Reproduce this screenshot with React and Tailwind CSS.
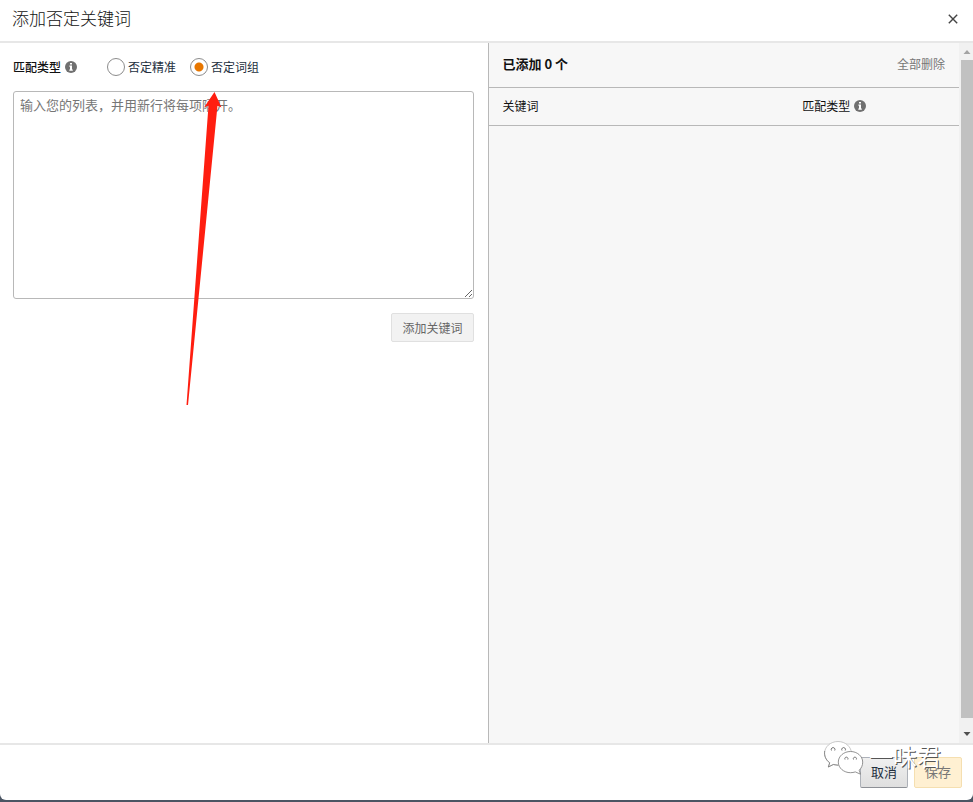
import { useState } from "react";

const MATCH_TYPES = [
  { value: "exact", label: "否定精准" },
  { value: "phrase", label: "否定词组" },
];

function InfoIcon() {
  return (
    <svg viewBox="0 0 12 12" className="size-3 shrink-0" aria-hidden="true">
      <circle cx="6" cy="6" r="6" fill="#707070" />
      <path d="M5 2h2v1.6H5zM4.4 4.6H7v4h.8v1.2H4.300V8.600H5V5.800h-.6z" fill="#fff" />
    </svg>
  );
}

function Watermark() {
  return (
    <div className="pointer-events-none absolute right-8 bottom-6 flex items-start">
      <svg viewBox="0 0 46 36" className="h-9 w-[46px]" aria-hidden="true">
        <g fill="#fff" strokeWidth="0.8" strokeLinejoin="round">
          <path
            d="M15 1.500C7.500 1.500 1.500 6.800 1.500 13.500c0 3.800 2 7.200 5.200 9.300l-1.400 4.200 5-2.500c1.500.4 3 .7 4.700.7 7.500 0 13.500-5.200 13.500-11.700S22.500 1.500 15 1.500z"
            stroke="#bbb"
          />
          <path d="M1.700 11c-.8 4.700 1.300 9 5 11.800l-1.400 4.200 5-2.500 4.700.7" stroke="#777" fill="none" />
          <path
            d="M27.500 11.500c-6.700 0-12.200 4.700-12.200 10.600s5.500 10.600 12.200 10.600c1.700 0 3.300-.3 4.800-.8l5.200 2.300-1.300-4c2.200-2 3.500-4.900 3.500-8.100 0-5.900-5.500-10.600-12.200-10.600z"
            stroke="#777"
          />
        </g>
        <g fill="none" stroke="#666" strokeWidth="0.9">
          <path d="M8.500 10.500a1.900 1.900 0 1 1 3.200 0M19 10.500a1.900 1.900 0 1 1 3.200 0" />
          <path d="M22 19.500a1.600 1.600 0 1 1 2.800 0M30.500 19.500a1.600 1.600 0 1 1 2.800 0" />
        </g>
      </svg>
      <span className="text-2xl leading-8 text-white [text-shadow:1px_1px_0_#555]">
        一味君
      </span>
    </div>
  );
}

export default function App() {
  const [matchType, setMatchType] = useState("phrase");
  const [text, setText] = useState("");

  return (
    <div className="h-screen bg-[#4b5563] pb-0.5 font-['Noto_Sans_CJK_SC',sans-serif] text-xs text-[#111]">
      <div className="relative flex h-full flex-col overflow-hidden rounded-b-md bg-white">
        {/* Header */}
        <header className="flex h-[43px] shrink-0 items-center justify-between border-b-2 border-[#e7e7e7] pr-3.5 pb-1.5 pl-3">
          <h1 className="text-[17px] leading-6 font-light">添加否定关键词</h1>
          <button type="button" aria-label="关闭" className="cursor-pointer pt-0.5">
            <svg viewBox="0 0 12 12" className="size-3" aria-hidden="true">
              <path d="M1.800 1.800l8.400 8.400M10.200 1.800l-8.400 8.400" stroke="#444" strokeWidth="1.400" />
            </svg>
          </button>
        </header>

        <main className="flex min-h-0 flex-1">
          {/* Keyword entry */}
          <section className="relative w-[calc(50%+1px)] pt-3 pr-3.5 pl-[13px]">
            <div
              role="radiogroup"
              aria-labelledby="match-type"
              className="flex h-6 items-center"
            >
              <span id="match-type" className="mr-1 font-medium">
                匹配类型
              </span>
              <InfoIcon />
              <div className="ml-[30px] flex gap-3.5">
                {MATCH_TYPES.map((type) => (
                  <label
                    key={type.value}
                    className="flex cursor-pointer items-center gap-[3px] text-[#232f3e]"
                  >
                    <input
                      type="radio"
                      name="matchType"
                      value={type.value}
                      checked={matchType === type.value}
                      onChange={() => setMatchType(type.value)}
                      className="size-[18px] appearance-none rounded-full border border-[#8c8c8c] bg-white checked:bg-[radial-gradient(circle,#e77600_4px,#fff_5px)]"
                    />
                    {type.label}
                  </label>
                ))}
              </div>
            </div>

            <textarea
              aria-label="关键词"
              placeholder="输入您的列表，并用新行将每项隔开。"
              value={text}
              onChange={(e) => setText(e.target.value)}
              className="mt-3 block h-52 w-full resize rounded-[3px] border border-[#b8b8b8] px-1.5 py-1 text-[13px] leading-[18px] placeholder:text-[#767676]"
            />

            <div className="mt-3.5 flex justify-end">
              <button
                type="button"
                disabled={!text}
                className="h-[29px] rounded-xs border border-[#e0e0e0] bg-[#f2f2f2] px-2.5 text-[#666]"
              >
                添加关键词
              </button>
            </div>

            {/* Arrow pointing at the phrase option */}
            <svg
              viewBox="0 0 36 314"
              className="pointer-events-none absolute top-12 left-[186px] h-[314px] w-9"
              aria-hidden="true"
            >
              <path d="M28.500 1L35.500 16.500L31.500 14.500L2 314H.5L22.500 14.500L18 16.500Z" fill="#ff1e10" />
            </svg>
          </section>

          {/* Added keywords */}
          <section className="flex min-w-0 flex-1 border-l border-[#b8b8b8] bg-[#f7f7f7]">
            <div className="min-w-0 flex-1">
              <div className="flex h-[45px] items-center justify-between border-b border-[#b8b8b8] px-3.5 pb-0.5">
                <h2 className="text-[13px] font-bold">已添加 0 个</h2>
                <button type="button" className="cursor-pointer text-[#767676]">
                  全部删除
                </button>
              </div>
              <table className="w-full table-fixed text-left">
                <thead>
                  <tr className="h-[37px] border-b border-[#b8b8b8]">
                    <th className="w-2/3 pl-3.5 font-normal">关键词</th>
                    <th className="font-normal">
                      <span className="flex items-center gap-1">
                        匹配类型
                        <InfoIcon />
                      </span>
                    </th>
                  </tr>
                </thead>
                <tbody />
              </table>
            </div>

            {/* Scrollbar */}
            <div className="flex w-3.5 shrink-0 flex-col items-center bg-[#f1f1f1] pl-0.5">
              <svg viewBox="0 0 12 17" className="h-[17px] w-3" aria-hidden="true">
                <path d="M2.500 11L6 7l3.500 4z" fill="#a3a3a3" />
              </svg>
              <div className="w-full flex-1 bg-[#c1c1c1]" />
              <svg viewBox="0 0 12 25" className="h-[25px] w-3" aria-hidden="true">
                <path d="M2.500 14L6 18l3.500-4z" fill="#505050" />
              </svg>
            </div>
          </section>
        </main>

        {/* Footer */}
        <footer className="flex h-[57px] shrink-0 items-start justify-end gap-1.5 border-t-2 border-[#e7e7e7] pt-3 pr-[11px]">
          <button
            type="button"
            className="h-[31px] w-12 cursor-pointer rounded-xs border border-[#adb1b8] border-b-[#8d9096] bg-linear-to-b from-[#f0f0f0] to-[#dfdfdf] pb-0.5 text-[13px] text-[#232f3e]"
          >
            取消
          </button>
          <button
            type="button"
            disabled
            className="h-[31px] w-12 rounded-xs border border-[#f5dfb0] bg-[#fff0d2] pb-0.5 text-[13px] text-[#777]"
          >
            保存
          </button>
        </footer>
        <Watermark />
      </div>
    </div>
  );
}
